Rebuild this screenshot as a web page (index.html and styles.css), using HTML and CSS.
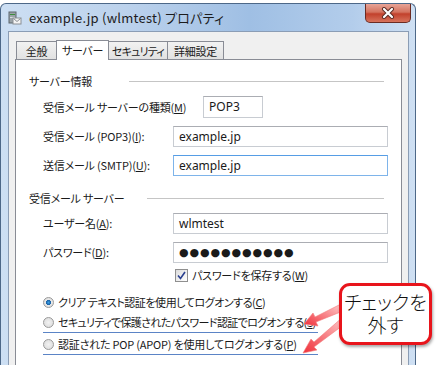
FILE: index.html
```html
<!DOCTYPE html>
<html lang="ja">
<head>
  <meta charset="UTF-8">
  <title>example.jp (wlmtest) プロパティ</title>
  <link rel="stylesheet" href="styles.css">
</head>
<body>
<div class="window">
  <div class="titlebar">
    <svg class="app-icon" width="14" height="14" viewBox="0 0 14 14">
      <rect x="1" y="1" width="7" height="11" fill="#9aa3a8" stroke="#5d666c"/>
      <rect x="2" y="3" width="5" height="1" fill="#3c8d3c"/>
      <rect x="2" y="6" width="5" height="1" fill="#d8dde0"/>
      <rect x="5" y="7" width="8" height="6" fill="#f4f4f4" stroke="#8a8f94"/>
      <path d="M5.5 7.5 L9 10.5 L12.5 7.5" fill="none" stroke="#8a8f94"/>
    </svg>
    <span class="title">example.jp (wlmtest) プロパティ</span>
    <div class="close">
      <svg width="14" height="12" viewBox="0 0 14 12">
        <path d="M3 2 L11 10 M11 2 L3 10" stroke="#5a2a22" stroke-width="4" stroke-linecap="round"/>
        <path d="M3 2 L11 10 M11 2 L3 10" stroke="#fff" stroke-width="2.2" stroke-linecap="round"/>
      </svg>
    </div>
  </div>
  <div class="dialog">
    <div class="tabs">
      <div class="tab t1">全般</div>
      <div class="tab t2 active">サーバー</div>
      <div class="tab t3">セキュリティ</div>
      <div class="tab t4">詳細設定</div>
    </div>
    <div class="panel">
      <div class="group-title"><span>サーバー情報</span><i class="rule"></i></div>
      <div class="row">
        <label class="label wide">受信メール サーバーの種類(<u>M</u>)</label>
        <div class="field short">POP3</div>
      </div>
      <div class="row">
        <label class="label">受信メール (POP3)(<u>I</u>):</label>
        <div class="field">example.jp</div>
      </div>
      <div class="row">
        <label class="label">送信メール (SMTP)(<u>U</u>):</label>
        <div class="field focused">example.jp</div>
      </div>

      <div class="group-title second"><span>受信メール サーバー</span><i class="rule"></i></div>
      <div class="row">
        <label class="label">ユーザー名(<u>A</u>):</label>
        <div class="field">wlmtest</div>
      </div>
      <div class="row">
        <label class="label">パスワード(<u>D</u>):</label>
        <div class="field dots">●●●●●●●●●●●</div>
      </div>
      <div class="check-row">
        <span class="checkbox">
          <svg width="9" height="9" viewBox="0 0 9 9"><path d="M1 4.5 L3.5 7.5 L8 1" fill="none" stroke="#2a3f8f" stroke-width="1.6"/></svg>
        </span>
        <span>パスワードを保存する(<u>W</u>)</span>
      </div>

      <div class="radio-row first"><span class="radio on"></span><span>クリア テキスト認証を使用してログオンする(<u>C</u>)</span></div>
      <div class="radio-row marked tight"><span class="radio"></span><span>セキュリティで保護されたパスワード認証でログオンする(<u>S</u>)</span></div>
      <div class="radio-row marked"><span class="radio"></span><span>認証された POP (APOP) を使用してログオンする(<u>P</u>)</span></div>
    </div>
  </div>
</div>

<svg class="arrows" width="448" height="365" viewBox="0 0 448 365">
  <defs>
    <linearGradient id="shaft" x1="1" y1="0" x2="0" y2="1">
      <stop offset="0" stop-color="#ffd0d0"/>
      <stop offset="1" stop-color="#f0303a"/>
    </linearGradient>
  </defs>
  <path d="M341 304 L315 317 L313 313 L304 324 L318 326 L316 322 L343 311 Z" fill="url(#shaft)" stroke="#f27a7a" stroke-width="0.6"/>
  <path d="M343 317 L314 342 L311 339 L303 353 L317 350 L314 347 L346 323 Z" fill="url(#shaft)" stroke="#f27a7a" stroke-width="0.6"/>
</svg>
<div class="callout">チェックを<br>外す</div>
</body>
</html>
```

FILE: styles.css
```css
body {
  margin: 0;
  width: 448px;
  height: 365px;
  overflow: hidden;
  background: #fff;
  font-family: "Noto Sans CJK JP", "Noto Sans", sans-serif;
  font-feature-settings: "palt";
  color: #1a1a1a;
}

.window {
  margin-top: 3px;
  width: 416px;
  height: 380px;
  border: 1px solid #4d6888;
  border-bottom: none;
  border-radius: 6px 6px 0 0;
  background: linear-gradient(90deg, #cddff3 0%, #bcd2ec 30%, #9fbfe4 60%, #b3cdeb 85%, #cfe0f3 100%);
  box-sizing: border-box;
}

.titlebar {
  display: flex;
  align-items: center;
  height: 27px;
  padding-left: 7px;
}
.app-icon {
  margin-top: 1px;
}
.title {
  margin-left: 7px;
  font-size: 13px;
  color: #1c1c1c;
  letter-spacing: 0.25px;
}
.close {
  margin-left: auto;
  margin-right: 4px;
  align-self: flex-start;
  width: 46px;
  height: 19px;
  box-sizing: border-box;
  border: 1px solid #6b2b22;
  border-top: none;
  border-radius: 0 0 5px 5px;
  background: linear-gradient(#e8a497 0%, #d4735f 45%, #c2412c 55%, #d7735c 100%);
  display: flex;
  align-items: center;
  justify-content: center;
}

.dialog {
  margin: 0 6px 0 7px;
  height: 360px;
  background: #f0f0f0;
  border: 1px solid #8b9db5;
  padding: 7px 6px 0 6px;
}

.tabs {
  display: flex;
  align-items: flex-end;
  height: 20px;
  padding-left: 1px;
}
.tab {
  height: 18px;
  line-height: 18px;
  font-size: 11px;
  letter-spacing: -0.3px;
  text-align: center;
  white-space: nowrap;
  box-sizing: border-box;
  border: 1px solid #898c95;
  border-bottom: none;
  border-right: none;
  background: linear-gradient(#f2f2f2, #e1e1e1);
  color: #1a1a1a;
}
.t1 { width: 40px; }
.t2 { width: 53px; }
.t3 { width: 58px; letter-spacing: -0.8px; }
.t4 { width: 57px; border-right: 1px solid #898c95; }
.tab.active {
  height: 20px;
  line-height: 19px;
  background: #fff;
  border-right: 1px solid #898c95;
  margin-bottom: -1px;
  position: relative;
}
.tab.active + .tab {
  border-left: none;
}

.panel {
  background: #fff;
  border: 1px solid #898c95;
  height: 320px;
  padding: 12px 0 0 13px;
  font-size: 11px;
  letter-spacing: -0.2px;
}

.group-title {
  display: flex;
  align-items: center;
  height: 18px;
  margin-bottom: 6px;
}
.group-title.second {
  margin-top: 13px;
  margin-bottom: 5px;
}
.rule {
  flex: 0 0 auto;
  height: 1px;
  background: #c5c5c5;
  margin-left: auto;
  margin-right: 17px;
}
.group-title .rule { width: 255px; }
.group-title.second .rule { width: 237px; }

.row {
  display: flex;
  align-items: center;
  height: 22px;
  margin-bottom: 7px;
  padding-left: 14px;
}
.label {
  width: 130px;
  white-space: nowrap;
}
.label.wide {
  width: 160px;
}
.field {
  width: 215px;
  height: 21px;
  box-sizing: border-box;
  border: 1px solid #c8ccd2;
  border-top-color: #abadb3;
  padding-left: 5px;
  line-height: 19px;
  font-family: "Noto Sans", "Noto Sans CJK JP", sans-serif;
  font-size: 12px;
  letter-spacing: 0;
}
.field.short {
  width: 60px;
  height: 22px;
}
.field.focused {
  border-color: #7eb4ea;
  border-top-color: #569de5;
}
.field.dots {
  font-family: "DejaVu Sans", sans-serif;
  font-size: 11px;
  letter-spacing: 0.9px;
}

.check-row {
  display: flex;
  align-items: center;
  height: 16px;
  margin-top: -3px;
  padding-left: 146px;
}
.checkbox {
  width: 11px;
  height: 11px;
  border: 1px solid #8f8f8f;
  background: linear-gradient(135deg, #dcdcdc, #fff);
  margin-right: 4px;
  display: flex;
  align-items: center;
  justify-content: center;
}

.radio-row {
  display: flex;
  align-items: center;
  height: 18px;
  margin-left: 14px;
  white-space: nowrap;
  letter-spacing: -0.45px;
}
.radio-row.first {
  margin-top: 10px;
}
.radio-row.marked {
  width: 275px;
  border-bottom: 1.5px solid #5b84c6;
  height: 20px;
  margin-top: 1px;
  letter-spacing: -0.2px;
}
.radio-row.tight {
  letter-spacing: -0.65px;
}
.radio {
  width: 11px;
  height: 11px;
  border-radius: 50%;
  border: 1px solid #9a9a9a;
  background: radial-gradient(circle, #f2f2f2 0%, #d8d8d8 100%);
  margin-right: 4px;
  box-sizing: border-box;
  flex: 0 0 auto;
}
.radio.on {
  background: radial-gradient(circle, #3aa0e6 0%, #1b64a8 35%, #e8e8e8 45%, #d8d8d8 100%);
}

.arrows {
  position: absolute;
  left: 0;
  top: 0;
}

.callout {
  position: absolute;
  left: 339px;
  top: 283px;
  width: 93px;
  height: 62px;
  box-sizing: border-box;
  border: 3px solid #e8141b;
  border-radius: 11px;
  background: #fff;
  box-shadow: 1px 2px 3px rgba(0, 0, 0, 0.35);
  text-align: center;
  font-size: 19px;
  font-weight: 300;
  line-height: 23px;
  padding-top: 4px;
  color: #111;
}
```
